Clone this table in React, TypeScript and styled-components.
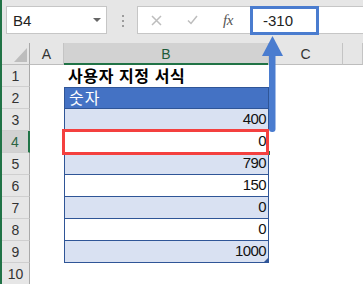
import React from 'react';
import styled, { createGlobalStyle, css } from 'styled-components';

const Global = createGlobalStyle`
  html, body { margin: 0; padding: 0; background: #fff; }
  body { font-family: "Liberation Sans", Arial, sans-serif; }
`;

const Window = styled.div`
  position: relative;
  width: 363px;
  height: 284px;
  overflow: hidden;
  box-sizing: border-box;
  border-left: 2px solid #217346;
  background: #fff;
`;

const Toolbar = styled.div`
  height: 43px;
  box-sizing: border-box;
  background: #e6e6e6;
  display: flex;
  align-items: flex-start;
  padding: 6px 0 0 4px;
`;

const NameBox = styled.div`
  width: 101px;
  height: 28px;
  box-sizing: border-box;
  border: 1px solid #c6c6c6;
  background: #fff;
  display: flex;
  align-items: center;
  justify-content: space-between;
  padding: 0 5px 0 6px;
  font-size: 15px;
  color: #222;
`;

const DropArrow = styled.span`
  width: 0;
  height: 0;
  border-left: 4px solid transparent;
  border-right: 4px solid transparent;
  border-top: 4px solid #666;
  margin-top: -1px;
`;

const Dots = styled.div`
  display: flex;
  flex-direction: column;
  gap: 3px;
  margin: 9px 13px 0 15px;
  span {
    width: 2px;
    height: 2px;
    background: #9c9c9c;
  }
`;

const FormulaBox = styled.div`
  flex: 1;
  height: 28px;
  box-sizing: border-box;
  border: 1px solid #c6c6c6;
  border-right: none;
  background: #fff;
  display: flex;
  align-items: center;
`;

const IconSlot = styled.div`
  width: 36px;
  height: 26px;
  display: flex;
  align-items: center;
  justify-content: center;
`;

const Fx = styled.span`
  font-family: "Liberation Serif", "Times New Roman", serif;
  font-style: italic;
  font-size: 15px;
  color: #555;
  letter-spacing: -0.5px;
`;

const ValueBox = styled.div`
  align-self: flex-start;
  margin: -1px 0 0 4px;
  width: 69px;
  height: 29px;
  box-sizing: border-box;
  border: 3px solid #4a7ccf;
  display: flex;
  align-items: center;
  padding-left: 10px;
  font-size: 15px;
  color: #222;
`;

const Sheet = styled.div`
  display: grid;
  grid-template-columns: 28px 34px 205px 74px 1fr;
  grid-auto-rows: 22px;
`;

const ColHead = styled.div<{ $sel?: boolean }>`
  box-sizing: border-box;
  background: ${(p) => (p.$sel ? '#d2d2d2' : '#e6e6e6')};
  border-right: 1px solid #c4c4c4;
  border-bottom: 1px solid #bdbdbd;
  display: flex;
  align-items: center;
  justify-content: center;
  font-size: 14px;
  color: ${(p) => (p.$sel ? '#1e5b39' : '#333')};
  ${(p) =>
    p.$sel &&
    css`
      border-bottom: none;
      box-shadow: inset 0 -2px 0 #217346;
    `}
`;

const Corner = styled(ColHead)`
  align-items: flex-end;
  justify-content: flex-end;
  border-right-color: #a9a9a9;
  svg { display: block; }
`;

const RowHead = styled.div<{ $sel?: boolean }>`
  box-sizing: border-box;
  background: ${(p) => (p.$sel ? '#d2d2d2' : '#e6e6e6')};
  border-right: ${(p) => (p.$sel ? '2px solid #217346' : '1px solid #a9a9a9')};
  border-bottom: 1px solid #cfcfcf;
  display: flex;
  align-items: center;
  justify-content: center;
  font-size: 14px;
  color: ${(p) => (p.$sel ? '#2a6443' : '#333')};
`;

const Blank = styled.div`
  background: #fff;
`;

type Kind = 'title' | 'head' | 'band' | 'plain';

const TCell = styled.div<{ $kind: Kind }>`
  position: relative;
  box-sizing: border-box;
  display: flex;
  align-items: center;
  padding: 0 2px 2px 4px;
  font-size: 15px;
  font-family: "Liberation Sans", "Noto Sans CJK KR", sans-serif;
  color: #111;
  justify-content: flex-end;
  letter-spacing: -0.6px;
  ${(p) =>
    p.$kind === 'title' &&
    css`
      justify-content: flex-start;
      font-weight: 700;
      font-size: 16px;
      letter-spacing: 0.6px;
      color: #000;
    `}
  ${(p) =>
    p.$kind === 'head' &&
    css`
      justify-content: flex-start;
      background: #4472c4;
      color: #fff;
      font-size: 16px;
      letter-spacing: 1px;
      border: 1px solid #2f5597;
    `}
  ${(p) =>
    (p.$kind === 'band' || p.$kind === 'plain') &&
    css`
      background: ${p.$kind === 'band' ? '#d9e1f2' : '#fff'};
      border-left: 1px solid #2f5597;
      border-right: 1px solid #2f5597;
      border-bottom: 1px solid #2f5597;
    `}
`;

const ResizeGrip = styled.span`
  position: absolute;
  right: 0;
  bottom: 0;
  width: 0;
  height: 0;
  border-left: 4px solid transparent;
  border-bottom: 4px solid #2f5597;
`;

const Selection = styled.div`
  position: absolute;
  left: 60px;
  top: 129px;
  width: 207px;
  height: 26px;
  box-sizing: border-box;
  border: 3px solid #f4403f;
  pointer-events: none;
`;

const FillHandle = styled.div`
  position: absolute;
  left: 264px;
  top: 151px;
  width: 4px;
  height: 4px;
  background: #217346;
`;

const Arrow = styled.svg`
  position: absolute;
  left: 256px;
  top: 34px;
  overflow: visible;
`;

const rows: { kind: Kind; text: string }[] = [
  { kind: 'title', text: '사용자 지정 서식' },
  { kind: 'head', text: '숫자' },
  { kind: 'band', text: '400' },
  { kind: 'plain', text: '0' },
  { kind: 'band', text: '790' },
  { kind: 'plain', text: '150' },
  { kind: 'band', text: '0' },
  { kind: 'plain', text: '0' },
  { kind: 'band', text: '1000' },
];

export default function App() {
  return (
    <>
      <Global />
      <Window>
        <Toolbar>
          <NameBox>
            <span>B4</span>
            <DropArrow />
          </NameBox>
          <Dots>
            <span />
            <span />
            <span />
          </Dots>
          <FormulaBox>
            <IconSlot>
              <svg width="11" height="11" viewBox="0 0 11 11">
                <path d="M1 1 L10 10 M10 1 L1 10" stroke="#bdbdbd" strokeWidth="1.5" fill="none" />
              </svg>
            </IconSlot>
            <IconSlot>
              <svg width="11" height="10" viewBox="0 0 11 10">
                <path d="M1 5.5 L4 8.5 L10 1" stroke="#bdbdbd" strokeWidth="1.5" fill="none" />
              </svg>
            </IconSlot>
            <IconSlot>
              <Fx>fx</Fx>
            </IconSlot>
            <ValueBox>-310</ValueBox>
          </FormulaBox>
        </Toolbar>
        <Sheet>
          <Corner>
            <svg width="16" height="18" viewBox="0 0 16 18">
              <polygon points="1,16 14,16 14,2" fill="#bdbdbd" />
            </svg>
          </Corner>
          <ColHead>A</ColHead>
          <ColHead $sel>B</ColHead>
          <ColHead>C</ColHead>
          <ColHead />
          {Array.from({ length: 10 }, (_, i) => {
            const r = rows[i];
            return (
              <React.Fragment key={i}>
                <RowHead $sel={i === 3}>{i + 1}</RowHead>
                <Blank />
                {r ? (
                  <TCell $kind={r.kind}>
                    {r.text}
                    {i === 8 && <ResizeGrip />}
                  </TCell>
                ) : (
                  <Blank />
                )}
                <Blank />
                <Blank />
              </React.Fragment>
            );
          })}
        </Sheet>
        <FillHandle />
        <Selection />
        <Arrow width="26" height="100" viewBox="0 0 26 100">
          <rect x="11" y="18" width="6.5" height="80" rx="3" fill="#4a7ccf" />
          <polygon points="4,22 25,22 14.5,2" fill="#4a7ccf" />
        </Arrow>
      </Window>
    </>
  );
}
